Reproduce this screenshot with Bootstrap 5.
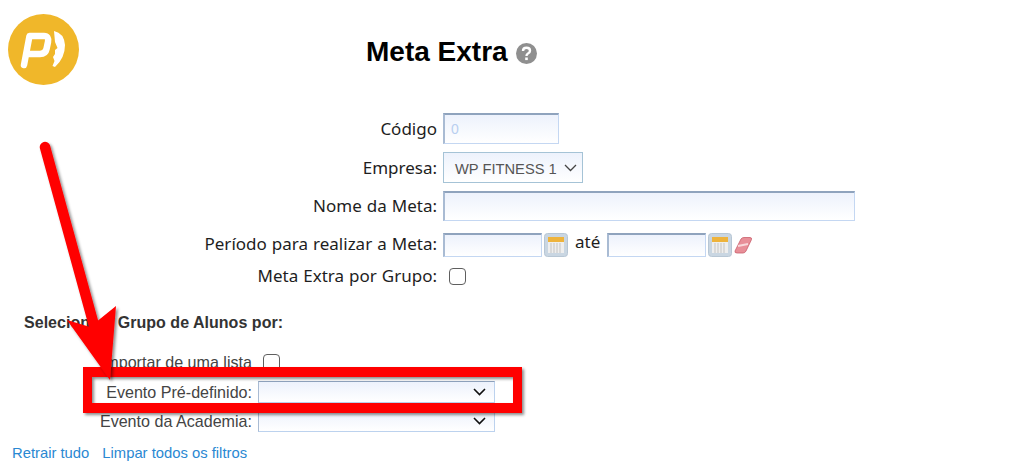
<!DOCTYPE html>
<html lang="pt-BR">
<head>
  <meta charset="UTF-8" />
  <meta name="viewport" content="width=device-width, initial-scale=1" />
  <title>Meta Extra</title>
  <link href="https://cdn.jsdelivr.net/npm/bootstrap@5.3.3/dist/css/bootstrap.min.css" rel="stylesheet">
  <style>
    body {
      background: #fff;
      width: 1024px;
      height: 466px;
      overflow: hidden;
      font-family: "Liberation Sans", Arial, sans-serif;
    }
    .page-head { height: 113px; padding: 14px 0 0 8px; }
    .page-title {
      font-family: "Liberation Sans", Arial, sans-serif;
      font-weight: 700;
      font-size: 28px;
      line-height: 32px;
      color: #000;
      margin: 22px 0 0 287px;
    }
    .help-dot { margin-left: 8px; vertical-align: -3px; }
    .meta-row { display: flex; align-items: center; gap: 6px; }
    .meta-label {
      width: 437px;
      text-align: right;
      font-family: "Noto Sans", sans-serif;
      font-size: 17px;
      word-spacing: .6px;
      color: #1e1e1e;
    }
    .field {
      display: block;
      height: 31px;
      padding: 0 6px;
      background: linear-gradient(#edf2fc, #fff);
      border: 1px solid #c4d7f2;
      border-top: 2px solid #8fa3bd;
      border-left: 2px solid #a9bbd3;
      border-radius: 0;
      color: #b9cff0;
      font-size: 14px;
    }
    .field-code { width: 116px; }
    .field-name { width: 412px; height: 30px; }
    .field-date { width: 99px; height: 24px; }
    .field-company {
      width: 140px;
      height: 31px;
      display: flex;
      align-items: center;
      justify-content: space-between;
      border: 1px solid #a5c3d6;
      color: #555;
      padding: 4px 5px 0 11px;
      font-size: 14.700px;
    }
    .row-code { margin-bottom: 8px; }
    .row-company { margin-bottom: 8px; }
    .row-name { margin-bottom: 12px; }
    .row-period { margin-bottom: 10px; height: 24px; }
    .row-period .meta-label { margin-top: -2px; }
    .row-group { height: 18px; margin-bottom: 29px; }
    .cal-btn { margin-left: -4px; flex: none; }
    .ate-word { font-family: "Noto Sans", sans-serif; font-size: 17px; color: #1e1e1e; margin: -6px 1px 0 1px; }
    .tick {
      width: 17px;
      height: 17px;
      border: 1.500px solid #5f5f5f;
      border-radius: 4px;
      background: #fff;
      flex: none;
    }
    .tick-a { margin-left: 6px; }
    .group-title {
      font-weight: 700;
      font-size: 16px;
      letter-spacing: .03px;
      line-height: 18px;
      color: #333;
      margin-left: 24px;
      margin-bottom: 21px;
    }
    .sel-row { display: flex; align-items: center; gap: 6px; }
    .sel-label { width: 252px; text-align: right; font-size: 16.100px; color: #444; line-height: 18px; }
    .sel-box {
      width: 237px;
      height: 22px;
      display: flex;
      align-items: center;
      justify-content: flex-end;
      padding-right: 8px;
      background: linear-gradient(#edf2fc, #fff);
      border: 1px solid #bcd2ee;
      border-top-color: #8fa3bd;
      border-left-color: #a9bbd3;
    }
    .row-import { height: 18px; margin-bottom: 10px; }
    .row-import .tick { margin-left: 5px; }
    .row-pre { margin-bottom: 7px; }
    .row-acad { margin-bottom: 12px; }
    .filter-links { display: flex; gap: 13px; padding-left: 12px; font-size: 14.800px; line-height: 18px; }
    .filter-links a { color: #2a88d2; text-decoration: none; }
    .callout { position: absolute; left: 0; top: 0; pointer-events: none; }
  </style>
</head>
<body>
  <div class="position-relative">
    <div class="page-head d-flex align-items-start">
      <svg width="71" height="71" viewBox="0 0 71 71">
        <circle cx="35.500" cy="35.500" r="35.500" fill="#f0b72a"/>
        <path d="M16 51 L21.500 22 H36 Q41 22 40 28 L38.500 35 Q37.500 40 32 40 H21" fill="none" stroke="#fff" stroke-width="6.500" stroke-linejoin="round" stroke-linecap="round"/>
        <path d="M46 17 Q56 19 57 31 Q57 44 47 53 L44.500 52 L46.500 47 L45 43 L47 40 L47 36 L49.500 34 L47 28 Z" fill="#fff"/>
      </svg>
      <h1 class="page-title">Meta Extra<svg class="help-dot" width="21" height="21" viewBox="0 0 21 21"><circle cx="10.500" cy="10.500" r="10.500" fill="#8f8f8f"/><path d="M7 8 Q7 4.800 10.500 4.800 Q14 4.800 14 7.800 Q14 9.500 12 10.500 Q10.500 11.300 10.500 13" fill="none" stroke="#fff" stroke-width="2.400"/><rect x="9.200" y="14.500" width="2.600" height="2.600" fill="#fff"/></svg></h1>
    </div>

    <div class="meta-row row-code">
      <span class="meta-label">Código</span>
      <div class="field field-code d-flex align-items-center">0</div>
    </div>
    <div class="meta-row row-company">
      <span class="meta-label">Empresa:</span>
      <div class="field field-company">
        <span>WP FITNESS 1</span>
        <svg width="13" height="8" viewBox="0 0 13 8" class="mb-1"><path d="M1 1 L6.500 6.500 L12 1" fill="none" stroke="#444" stroke-width="1.300"/></svg>
      </div>
    </div>
    <div class="meta-row row-name">
      <span class="meta-label">Nome da Meta:</span>
      <div class="field field-name"></div>
    </div>
    <div class="meta-row row-period">
      <span class="meta-label">Período para realizar a Meta:</span>
      <div class="field field-date"></div>
      <svg class="cal-btn" width="24" height="24" viewBox="0 0 24 24">
        <rect x="0.500" y="0.500" width="23" height="23" rx="3" fill="#c9d6e2" stroke="#b7c6d4"/>
        <rect x="4" y="4" width="16" height="16" fill="#eeeeee"/>
        <rect x="4" y="4" width="16" height="5" fill="#eeb33c"/>
        <path d="M7 10V20M10 10V20M13 10V20M16 10V20" stroke="#c4c4c4" stroke-width="1"/>
      </svg>
      <span class="ate-word">até</span>
      <div class="field field-date"></div>
      <svg class="cal-btn" width="24" height="24" viewBox="0 0 24 24">
        <rect x="0.500" y="0.500" width="23" height="23" rx="3" fill="#c9d6e2" stroke="#b7c6d4"/>
        <rect x="4" y="4" width="16" height="16" fill="#eeeeee"/>
        <rect x="4" y="4" width="16" height="5" fill="#eeb33c"/>
        <path d="M7 10V20M10 10V20M13 10V20M16 10V20" stroke="#c4c4c4" stroke-width="1"/>
      </svg>
      <svg class="cal-btn eraser-mark" width="18" height="17" viewBox="0 0 18 17">
        <path d="M7 2 Q8 0.500 10 0.500 H16 Q18 0.500 17.500 2.500 L12 14 Q11 16 9 16 H3 Q0.500 16 1 14 Z" fill="#e88f98" stroke="#c9606c" stroke-width="0.800"/>
        <path d="M4 9 L14 7" stroke="#f8d8da" stroke-width="1.800"/>
      </svg>
    </div>
    <div class="meta-row row-group">
      <span class="meta-label">Meta Extra por Grupo:</span>
      <span class="tick tick-a"></span>
    </div>

    <div class="group-title">Selecione o Grupo de Alunos por:</div>

    <div class="sel-row row-import">
      <span class="sel-label">Importar de uma lista</span>
      <span class="tick"></span>
    </div>
    <div class="sel-row row-pre">
      <span class="sel-label">Evento Pré-definido:</span>
      <div class="sel-box"><svg width="13" height="8" viewBox="0 0 13 8"><path d="M1 1 L6.500 6.500 L12 1" fill="none" stroke="#111" stroke-width="1.600"/></svg></div>
    </div>
    <div class="sel-row row-acad">
      <span class="sel-label">Evento da Academia:</span>
      <div class="sel-box"><svg width="13" height="8" viewBox="0 0 13 8"><path d="M1 1 L6.500 6.500 L12 1" fill="none" stroke="#111" stroke-width="1.600"/></svg></div>
    </div>
    <div class="filter-links">
      <a href="#">Retrair tudo</a>
      <a href="#">Limpar todos os filtros</a>
    </div>

    <svg class="callout" width="1024" height="466" viewBox="0 0 1024 466">
      <defs>
        <filter id="soft" x="-10%" y="-10%" width="125%" height="125%">
          <feDropShadow dx="2" dy="2" stdDeviation="1.500" flood-color="#000" flood-opacity="0.450"/>
        </filter>
      </defs>
      <path d="M83 367 H522 V413 H83 Z M92 377 V403 H513 V377 Z" fill="#ff0000" fill-rule="evenodd" filter="url(#soft)"/>
      <g filter="url(#soft)">
        <path d="M45 147 L98 340" stroke="#ff0000" stroke-width="10.500" stroke-linecap="round" fill="none"/>
        <path d="M67 320 L90 327 L116 306 L110 380 Z" fill="#ff0000"/>
      </g>
    </svg>
  </div>
</body>
</html>
